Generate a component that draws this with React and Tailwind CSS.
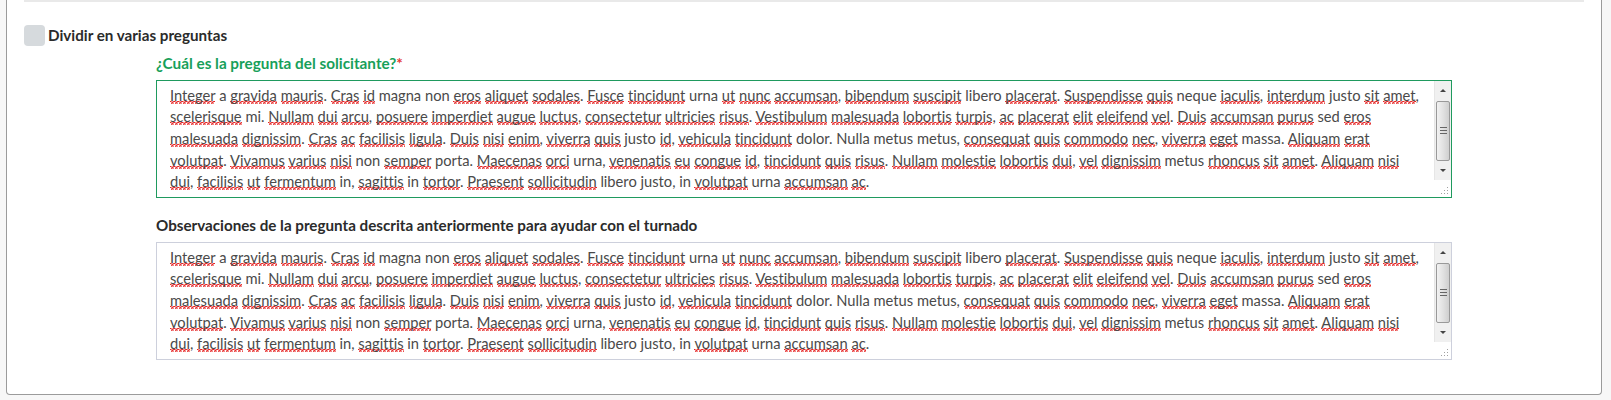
import React from 'react';

const LINES = [
  'Integer a gravida mauris. Cras id magna non eros aliquet sodales. Fusce tincidunt urna ut nunc accumsan, bibendum suscipit libero placerat. Suspendisse quis neque iaculis, interdum justo sit amet,',
  'scelerisque mi. Nullam dui arcu, posuere imperdiet augue luctus, consectetur ultricies risus. Vestibulum malesuada lobortis turpis, ac placerat elit eleifend vel. Duis accumsan purus sed eros',
  'malesuada dignissim. Cras ac facilisis ligula. Duis nisi enim, viverra quis justo id, vehicula tincidunt dolor. Nulla metus metus, consequat quis commodo nec, viverra eget massa. Aliquam erat',
  'volutpat. Vivamus varius nisi non semper porta. Maecenas orci urna, venenatis eu congue id, tincidunt quis risus. Nullam molestie lobortis dui, vel dignissim metus rhoncus sit amet. Aliquam nisi',
  'dui, facilisis ut fermentum in, sagittis in tortor. Praesent sollicitudin libero justo, in volutpat urna accumsan ac.',
];

// words the spell checker accepts (no red squiggle)
const KNOWN = new Set(['a', 'magna', 'non', 'urna', 'libero', 'neque', 'justo', 'mi', 'sed', 'dolor', 'nulla', 'metus', 'massa', 'porta', 'in']);

function Word({ token }) {
  const m = token.match(/^([^\p{L}]*)(\p{L}+)(.*)$/u);
  if (!m) return token;
  const [, pre, core, post] = m;
  if (KNOWN.has(core.toLowerCase())) return token;
  return (
    <>
      {pre}
      <span className="bg-[linear-gradient(45deg,transparent_65%,#e41b1b_80%,transparent_90%),linear-gradient(135deg,transparent_5%,#e41b1b_15%,transparent_25%),linear-gradient(135deg,transparent_45%,#e41b1b_55%,transparent_65%),linear-gradient(45deg,transparent_35%,#e41b1b_50%,transparent_65%)] bg-[length:4px_3px] bg-repeat-x bg-left-bottom">
        {core}
      </span>
      {post}
    </>
  );
}

function Line({ text }) {
  const parts = text.split(/(\s+)/);
  return (
    <div className="whitespace-nowrap">
      {parts.map((p, i) => (/\s/.test(p) ? p : <Word key={i} token={p} />))}
    </div>
  );
}

function Scrollbar() {
  return (
    <div className="flex flex-col w-[17px] h-[99px] bg-[#f0f0f0] border-l border-[#e6e6e6]">
      <div className="h-[20px] flex items-center justify-center">
        <div className="w-0 h-0 border-l-[3px] border-r-[3px] border-b-[3px] border-l-transparent border-r-transparent border-b-[#444]" />
      </div>
      <div className="h-[60px] mx-[1px] rounded-[2px] border border-[#999] bg-gradient-to-r from-[#f2f2f2] via-[#e2e2e2] to-[#cfcfcf] flex flex-col items-center justify-center gap-[2px]">
        <div className="w-[7px] h-px bg-[#666]" />
        <div className="w-[7px] h-px bg-[#666]" />
        <div className="w-[7px] h-px bg-[#666]" />
      </div>
      <div className="flex-1 flex items-center justify-center">
        <div className="w-0 h-0 border-l-[3px] border-r-[3px] border-t-[3px] border-l-transparent border-r-transparent border-t-[#444]" />
      </div>
    </div>
  );
}

function Grip() {
  return (
    <svg width="8" height="8" viewBox="0 0 8 8" className="absolute right-[2px] bottom-[2px]">
      <g fill="#a0a0a0">
        <rect x="6" y="0" width="1" height="1" />
        <rect x="3" y="3" width="1" height="1" />
        <rect x="6" y="3" width="1" height="1" />
        <rect x="0" y="6" width="1" height="1" />
        <rect x="3" y="6" width="1" height="1" />
        <rect x="6" y="6" width="1" height="1" />
      </g>
    </svg>
  );
}

function TextBox({ focused }) {
  return (
    <div
      className={`relative flex w-[1296px] h-[118px] bg-white border ${focused ? 'border-[#1f9a5e]' : 'border-[#cdd0dc]'}`}
    >
      <div className="flex-1 pl-[13px] pt-[4px] text-[14.7px] leading-[21.67px] text-[#4a4a4a] overflow-hidden">
        {LINES.map((l, i) => (
          <Line key={i} text={l} />
        ))}
      </div>
      <div className="flex flex-col">
        <Scrollbar />
      </div>
      <Grip />
    </div>
  );
}

export default function App() {
  return (
    <div className="h-[400px] bg-[#f7f7f7] font-['Lato',sans-serif] [font-variant-ligatures:none]">
      <div className="ml-[6px] w-[1596px] h-[395px] bg-white border-l border-r border-b border-[#9b9b9b] rounded-b-[4px]">
        <div className="ml-[17px] w-[1560px] h-[2px] bg-[#e9e9e9]" />
        <div className="flex items-center gap-[3px] pl-[17px] mt-[22px]">
          <div className="w-[21px] h-[21px] rounded-[4px] bg-[#d6dadd]" />
          <span className="text-[15.2px] font-bold text-[#2b2b2b]">Dividir en varias preguntas</span>
        </div>
        <div className="pl-[149px] mt-[6px]">
          <div className="text-[15.3px] font-bold text-[#17a05a] leading-[20px] mb-[7px]">
            ¿Cuál es la pregunta del solicitante?<span className="text-[#e53935]">*</span>
          </div>
          <TextBox focused />
          <div className="text-[15.2px] font-bold text-[#2b2b2b] leading-[20px] mt-[17px] mb-[7px]">
            Observaciones de la pregunta descrita anteriormente para ayudar con el turnado
          </div>
          <TextBox />
        </div>
      </div>
    </div>
  );
}
